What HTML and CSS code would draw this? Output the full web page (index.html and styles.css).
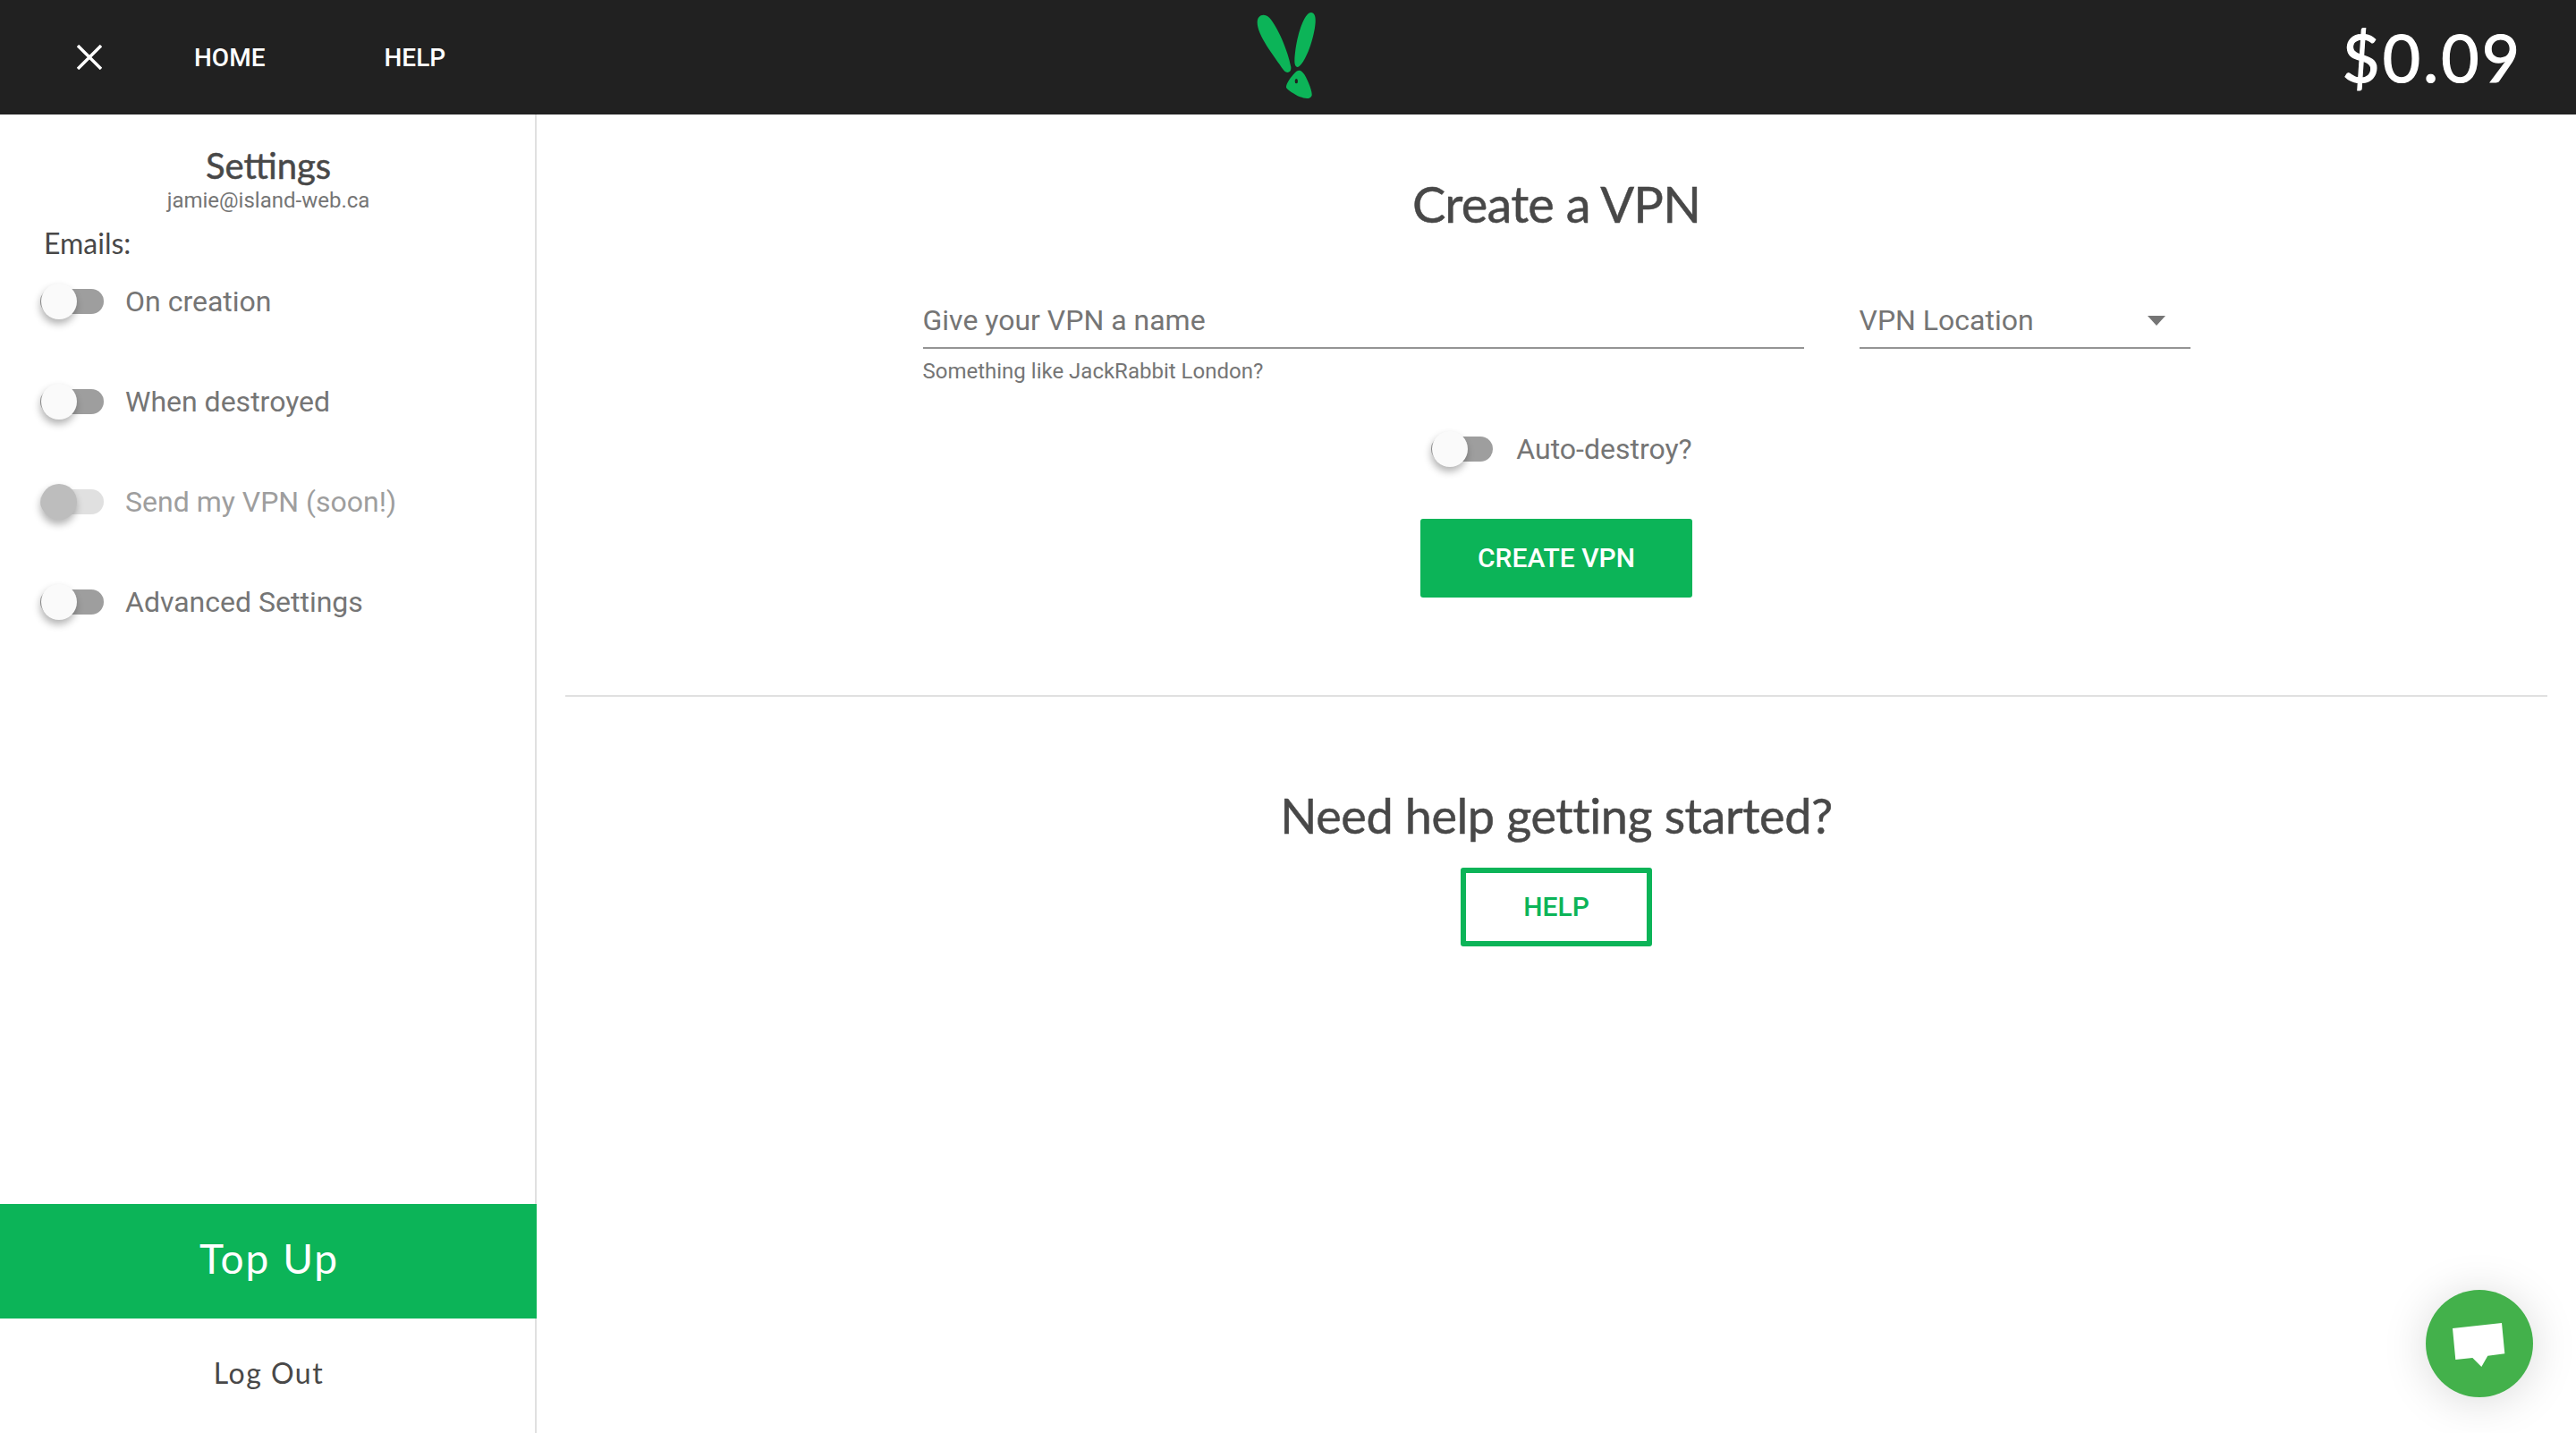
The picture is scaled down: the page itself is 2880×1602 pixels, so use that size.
FILE: index.html
```html
<!DOCTYPE html>
<html lang="en">
<head>
  <meta charset="UTF-8">
  <title>Create a VPN</title>
  <link rel="stylesheet" href="styles.css">
</head>
<body>

<!-- TOP BAR -->
<header class="topbar">
  <nav class="topbar-nav">
    <svg class="close-icon" viewBox="0 0 28 28" width="28" height="28">
      <path d="M1 1 L27 27 M27 1 L1 27" stroke="#fff" stroke-width="3.4" fill="none"/>
    </svg>
    <a class="nav-link nav-home">HOME</a>
    <a class="nav-link">HELP</a>
  </nav>
  <svg class="logo" viewBox="0 0 480 384" width="160" height="128">
    <path fill="#0cb458" d="M137 75 C137 50 160 42 178 60 C205 90 240 170 250 225 C252 245 235 248 225 235 C195 190 137 120 137 75 Z"/>
    <path fill="#0cb458" d="M300 55 C315 32 335 40 332 75 C328 130 300 205 278 222 C268 230 262 220 262 205 C264 150 280 85 300 55 Z"/>
    <path fill="#0cb458" d="M262 245 C275 230 285 235 295 250 C310 275 322 310 320 320 C315 335 295 330 280 325 C260 315 238 302 234 293 C233 280 250 258 262 245 Z"/>
    <ellipse cx="268" cy="272" rx="5" ry="8" fill="#212121"/>
  </svg>
  <div class="balance">$0.09</div>
</header>

<div class="page">
  <!-- SETTINGS SIDEBAR -->
  <aside class="sidebar">
    <h3 class="sidebar-title">Settings</h3>
    <div class="sidebar-email">jamie@island-web.ca</div>
    <div class="emails-label">Emails:</div>

    <div class="switch-list">
      <div class="switch-row">
        <span class="switch"><span class="thumb"></span></span>
        <span class="switch-label">On creation</span>
      </div>
      <div class="switch-row">
        <span class="switch"><span class="thumb"></span></span>
        <span class="switch-label">When destroyed</span>
      </div>
      <div class="switch-row disabled">
        <span class="switch"><span class="thumb"></span></span>
        <span class="switch-label">Send my VPN (soon!)</span>
      </div>
      <div class="switch-row">
        <span class="switch"><span class="thumb"></span></span>
        <span class="switch-label">Advanced Settings</span>
      </div>
    </div>

    <a class="topup">Top Up</a>
    <a class="logout">Log Out</a>
  </aside>

  <!-- MAIN -->
  <main class="main">
    <h2 class="heading">Create a VPN</h2>

    <div class="form-row">
      <div class="name-col">
        <input class="field" type="text" placeholder="Give your VPN a name">
        <div class="hint">Something like JackRabbit London?</div>
      </div>
      <div class="field select-field">
        <span>VPN Location</span>
        <span class="caret"></span>
      </div>
    </div>

    <div class="switch-row auto-destroy">
      <span class="switch"><span class="thumb"></span></span>
      <span class="switch-label">Auto-destroy?</span>
    </div>

    <a class="btn btn-solid">CREATE VPN</a>

    <hr class="divider">

    <h2 class="heading heading-help">Need help getting started?</h2>
    <a class="btn btn-outline">HELP</a>
  </main>
</div>

<!-- CHAT -->
<div class="chat">
  <svg viewBox="0 0 120 120" width="120" height="120">
    <path fill="#fff" d="M30 43 L85 37 L88.3 71.300 L69.300 73.700 L62.300 86 L52.300 76 L33.300 78 Z"/>
  </svg>
</div>

</body>
</html>
```

FILE: styles.css
```css
* {
  box-sizing: border-box;
}
body {
  margin: 0;
  height: 100vh;
  display: flex;
  flex-direction: column;
  overflow: hidden;
  background: #fff;
  font-family: Roboto, sans-serif;
  color: #757575;
}
h2, h3 {
  margin: 0;
  font-family: Lato, sans-serif;
  font-weight: 400;
  color: #484848;
  -webkit-text-stroke: 0.5px #484848;
}

/* top bar */
.topbar {
  height: 128px;
  flex: none;
  display: grid;
  grid-template-columns: 1fr auto 1fr;
  align-items: center;
  background: #212121;
}
.topbar-nav {
  display: flex;
  align-items: center;
  padding-left: 86px;
}
.nav-link {
  font-size: 28px;
  font-weight: 500;
  color: #fff;
}
.nav-home {
  margin-left: 103px;
  margin-right: 133px;
}
.logo {
  display: block;
}
.balance {
  justify-self: end;
  padding-right: 60px;
  font-family: Lato, sans-serif;
  font-size: 73px;
  letter-spacing: 3px;
  color: #fff;
  -webkit-text-stroke: 1.200px #fff;
}

.page {
  flex: 1;
  display: flex;
  min-height: 0;
}

/* sidebar */
.sidebar {
  width: 600px;
  flex: none;
  display: flex;
  flex-direction: column;
  border-right: 2px solid #e0e0e0;
}
.sidebar-title {
  margin-top: 32px;
  padding-left: 2px;
  line-height: 50px;
  text-align: center;
  font-size: 40px;
}
.sidebar-email {
  padding-left: 2px;
  line-height: 29px;
  text-align: center;
  font-size: 24px;
}
.emails-label {
  margin-top: 13px;
  padding-left: 49px;
  line-height: 40px;
  font-family: Lato, sans-serif;
  font-size: 32px;
  color: #484848;
}
.switch-list {
  margin-top: 25px;
  padding-left: 45px;
  display: flex;
  flex-direction: column;
  gap: 72px;
}
.switch-row {
  height: 40px;
  display: flex;
  align-items: center;
  gap: 24px;
}
.switch {
  position: relative;
  width: 71px;
  height: 28px;
  border-radius: 14px;
  background: #9e9e9e;
}
.thumb {
  position: absolute;
  left: 1px;
  top: -6px;
  width: 40px;
  height: 40px;
  border-radius: 50%;
  background: #fafafa;
  box-shadow: -1px 5px 8px rgba(0, 0, 0, 0.3);
}
.switch-label {
  font-size: 32px;
}
.disabled .switch { background: #e0e0e0; }
.disabled .thumb { background: #bdbdbd; }
.disabled .switch-label { color: #9e9e9e; }

.topup {
  margin-top: auto;
  margin-right: -2px;
  height: 128px;
  padding: 0 0 7px 2px;
  display: flex;
  align-items: center;
  justify-content: center;
  background: #0cb458;
  color: #fff;
  font-family: Lato, sans-serif;
  font-size: 46px;
  letter-spacing: 2px;
}
.logout {
  height: 128px;
  padding: 0 0 7px 3px;
  display: flex;
  align-items: center;
  justify-content: center;
  font-family: Lato, sans-serif;
  font-size: 32px;
  letter-spacing: 1.500px;
  color: #484848;
}

/* main */
.main {
  flex: 1;
  padding: 65px 32px 0;
  display: flex;
  flex-direction: column;
  align-items: center;
}
.heading {
  line-height: 70px;
  font-size: 56px;
  letter-spacing: -0.800px;
}
.form-row {
  margin-top: 67px;
  width: 1417px;
  display: flex;
  gap: 62px;
}
.name-col {
  flex: 1;
}
.field {
  display: block;
  width: 100%;
  height: 60px;
  margin: 0;
  padding: 0 0 2px;
  border: 0;
  border-bottom: 2px solid #949494;
  border-radius: 0;
  outline: none;
  font-family: Roboto, sans-serif;
  font-size: 32px;
  color: #757575;
}
.field::placeholder {
  color: #757575;
  opacity: 1;
}
.hint {
  margin-top: 10px;
  line-height: 30px;
  font-size: 24px;
}
.select-field {
  width: 370px;
  flex: none;
  display: flex;
  align-items: center;
  justify-content: space-between;
  padding-right: 28px;
}
.caret {
  border-left: 10px solid transparent;
  border-right: 10px solid transparent;
  border-top: 11px solid #757575;
}
.auto-destroy {
  margin-top: 52px;
  padding-left: 12px;
  gap: 26px;
}
.auto-destroy .switch {
  width: 69px;
}
.btn {
  display: flex;
  align-items: center;
  justify-content: center;
  height: 88px;
  padding-bottom: 2px;
  border-radius: 3px;
  font-size: 30px;
  font-weight: 500;
}
.btn-solid {
  margin-top: 58px;
  width: 304px;
  background: #0cb458;
  color: #fff;
}
.divider {
  width: 100%;
  margin: 109px 0 0;
  border: 0;
  border-top: 2px solid #e0e0e0;
}
.heading-help {
  margin-top: 98px;
  margin-bottom: 3px;
  font-size: 54px;
  letter-spacing: -0.400px;
}
.btn-outline {
  margin-top: 20px;
  width: 214px;
  border: 6px solid #0cb458;
  color: #0cb458;
}

/* chat button */
.chat {
  position: fixed;
  left: 2712px;
  top: 1442px;
  width: 120px;
  height: 120px;
  border-radius: 50%;
  background: #43b14b;
  box-shadow: 0 4px 50px rgba(0, 0, 0, 0.15);
}
.chat svg {
  display: block;
}
```
